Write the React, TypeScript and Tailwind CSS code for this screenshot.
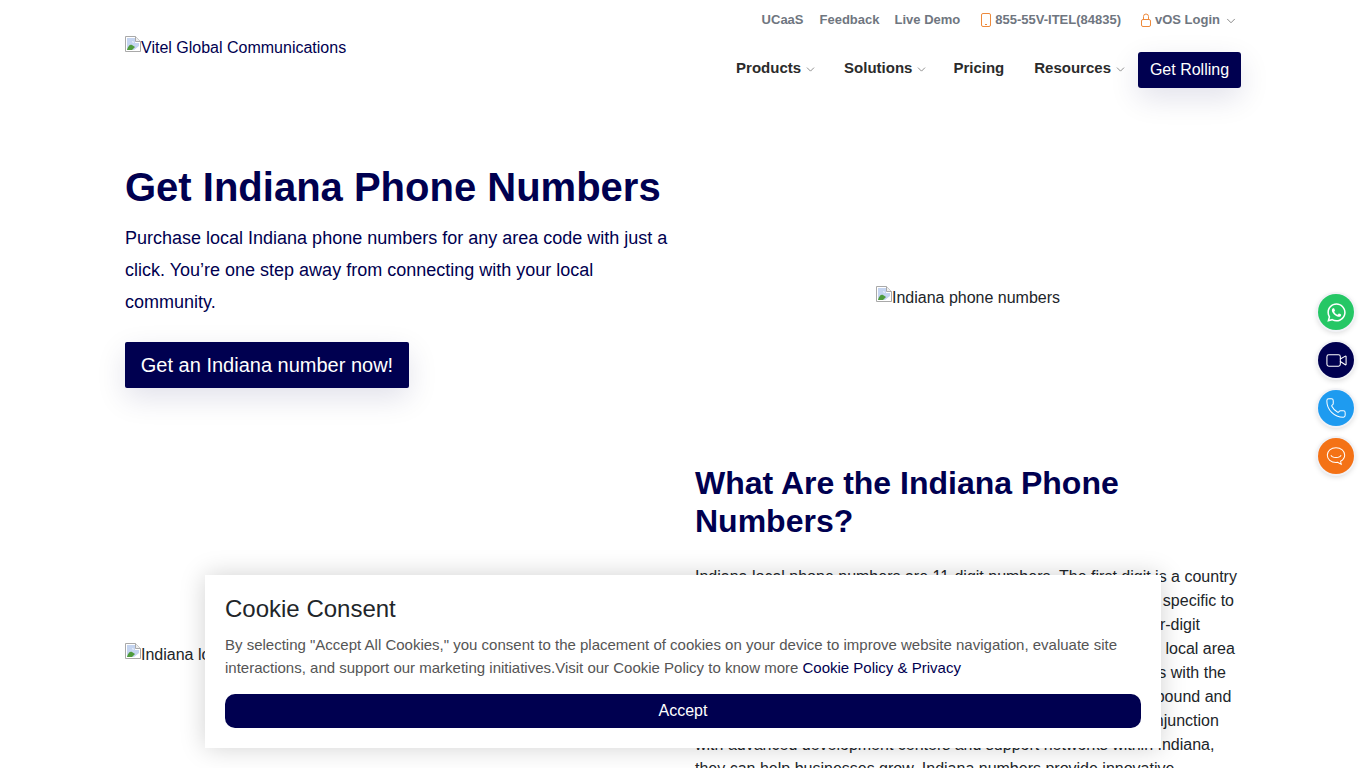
import { ChevronDown, Phone, Video } from 'lucide-react';
import { FaWhatsapp } from 'react-icons/fa';

const bodyLines = [
  'Indiana local phone numbers are 11-digit numbers. The first digit is a country',
  'code of 1, and the following three digits form the area code that is specific to',
  'the state. The next three digits are an exchange code, the last four-digit',
  'number identifies the user. Businesses can use these numbers as local area',
  'codes that help them form a presence and connect with customers with the',
  'help of a reliable virtual phone system that manages all of their inbound and',
  'outbound calls in one place. When these numbers are used in conjunction',
  'with advanced development centers and support networks within Indiana,',
  'they can help businesses grow. Indiana numbers provide innovative',
];

function BrokenImage() {
  return (
    <svg className="-mt-[2px] h-4 w-4 shrink-0" viewBox="0 0 16 16">
      <path d="M.5.5h10l5 5v10H.5z" fill="#fff" stroke="#a9a9a9" />
      <path d="M10.5.5v5h5" fill="#eee" stroke="#a9a9a9" />
      <path d="M2 2h8v5h4v3l-5 4H2z" fill="#c4d4f0" />
      <path d="M2 14c1-4 3-6 5-5l3 2-3 3z" fill="#4e9b3c" />
      <path d="M7 5l2 1-1 1z" fill="#fff" />
    </svg>
  );
}

function SideButton({ className, children }: { className: string; children: React.ReactNode }) {
  return (
    <div
      className={`flex h-[36px] w-[36px] items-center justify-center rounded-full text-white shadow-[0_0_0_2px_#f1f2f6,0_2px_6px_rgba(0,0,0,0.2)] ${className}`}
    >
      {children}
    </div>
  );
}

function NavItem({ label, className, hasMenu = true }: { label: string; className: string; hasMenu?: boolean }) {
  return (
    <span className={`flex items-center text-[15px] font-bold text-[#2b2b2b] ${className}`}>
      {label}
      {hasMenu && <ChevronDown className="ml-[3px] mt-[3px] text-[#555]" size={13} strokeWidth={1.2} />}
    </span>
  );
}

export default function App() {
  return (
    <div className="relative h-[768px] overflow-hidden bg-white font-['Liberation_Sans',Arial,sans-serif] text-[#212529]">
      <div className="mx-auto w-[1116px]">
        <header className="flex h-[108px] justify-between">
          <div className="flex pt-[38px] text-[16px] leading-[20px] text-[#000050]">
            <BrokenImage />
            <span>Vitel Global Communications</span>
          </div>
          <div className="flex flex-col items-end">
            <div className="flex h-[39px] items-center pr-[3px] text-[13px] font-bold text-[#6f7680]">
              <span className="mr-[16px]">UCaaS</span>
              <span className="mr-[15px]">Feedback</span>
              <span className="mr-[21px]">Live Demo</span>
              <span className="mr-[20px] flex items-center">
                <svg className="mr-[4px]" fill="none" height="14" stroke="#ee8a3c" viewBox="0 0 10 14" width="10">
                  <rect height="13" rx="1.5" width="9" x=".5" y=".5" />
                  <path d="M4 11.5h2" />
                </svg>
                855-55V-ITEL(84835)
              </span>
              <span className="flex items-center">
                <svg className="mr-[4px]" fill="none" height="14" stroke="#ee8a3c" viewBox="0 0 10 14" width="10">
                  <path d="M2.5 7V3.5a2.5 2.5 0 0 1 5 0V7" />
                  <rect height="7" rx="1.5" width="9" x=".5" y="6.5" />
                </svg>
                vOS Login
                <ChevronDown className="ml-[4px] mt-[2px] text-[#666]" size={14} strokeWidth={1.3} />
              </span>
            </div>
            <div className="mt-[13px] flex items-start">
              <div className="flex h-[32px] items-center pr-[11px]">
                <NavItem className="" label="Products" />
                <NavItem className="ml-[27px]" label="Solutions" />
                <NavItem className="ml-[25px]" hasMenu={false} label="Pricing" />
                <NavItem className="ml-[30px]" label="Resources" />
              </div>
              <button
                className="h-[36px] w-[103px] rounded-[3px] bg-[#000050] text-[16px] text-white shadow-[0_10px_30px_rgba(0,0,80,0.12)]"
                type="button"
              >
                Get Rolling
              </button>
            </div>
          </div>
        </header>

        <section className="flex h-[308px]">
          <div className="w-[570px] pt-[56px]">
            <h1 className="text-[40px] font-bold leading-[46px] text-[#000050]">Get Indiana Phone Numbers</h1>
            <p className="mt-[12px] w-[550px] text-[18px] leading-[32px] text-[#000050]">
              Purchase local Indiana phone numbers for any area code with just a click. You’re one step away from
              connecting with your local community.
            </p>
            <button
              className="mt-[24px] h-[46px] w-[284px] rounded-[2px] bg-[#000050] text-[20px] text-white shadow-[0_10px_30px_rgba(0,0,80,0.12)]"
              type="button"
            >
              Get an Indiana number now!
            </button>
          </div>
          <div className="flex flex-1 justify-center pt-[180px] text-[16px] leading-[20px]">
            <BrokenImage />
            <span>Indiana phone numbers</span>
          </div>
        </section>

        <section className="flex">
          <div className="flex w-[570px] shrink-0 pt-[229px] text-[16px] leading-[20px]">
            <BrokenImage />
            <span>Indiana local phone numbers</span>
          </div>
          <div className="min-w-0 flex-1 pt-[48px]">
            <h2 className="text-[32px] font-bold leading-[38px] text-[#000050]">
              What Are the Indiana Phone
              <br />
              Numbers?
            </h2>
            <div className="mt-[25px] text-[16px] leading-[24px]">
              {bodyLines.map((line) => (
                <div className="whitespace-nowrap" key={line}>
                  {line}
                </div>
              ))}
            </div>
          </div>
        </section>
      </div>

      <div className="absolute left-[1318px] top-[294px] flex flex-col gap-[12px]">
        <SideButton className="bg-[#25c765]">
          <FaWhatsapp size={21} />
        </SideButton>
        <SideButton className="bg-[#000050]">
          <Video size={23} strokeWidth={1.1} />
        </SideButton>
        <SideButton className="bg-[#1e9bf0]">
          <Phone size={22} strokeWidth={1.1} />
        </SideButton>
        <SideButton className="bg-[#f47216]">
          <svg fill="none" height="22" stroke="currentColor" strokeWidth="1.1" viewBox="0 0 24 24" width="22">
            <path d="M12 3c5.5 0 9.5 3.4 9.5 8 0 3-1.8 5.4-4.5 6.8l.7 3.2-4-2.2c-.6.1-1.1.2-1.7.2-5.5 0-9.5-3.4-9.5-8s4-8 9.5-8z" />
            <path d="M6.5 11c1.2 3.4 9.8 3.4 11 0" />
          </svg>
        </SideButton>
      </div>

      <div className="absolute left-[205px] top-[575px] h-[173px] w-[956px] bg-white px-[20px] pt-[20px] shadow-[0_0_24px_rgba(0,0,0,0.18)]">
        <h3 className="text-[24px] leading-[28px] text-[#212529]">Cookie Consent</h3>
        <p className="mt-[10px] text-[15px] leading-[23px] text-[#555]">
          By selecting "Accept All Cookies," you consent to the placement of cookies on your device to improve website
          navigation, evaluate site interactions, and support our marketing initiatives.Visit our Cookie Policy to know
          more <span className="text-[#000050]">Cookie Policy &amp; Privacy</span>
        </p>
        <button
          className="mt-[15px] h-[34px] w-full rounded-[10px] bg-[#000050] text-[16px] text-white"
          type="button"
        >
          Accept
        </button>
      </div>
    </div>
  );
}
